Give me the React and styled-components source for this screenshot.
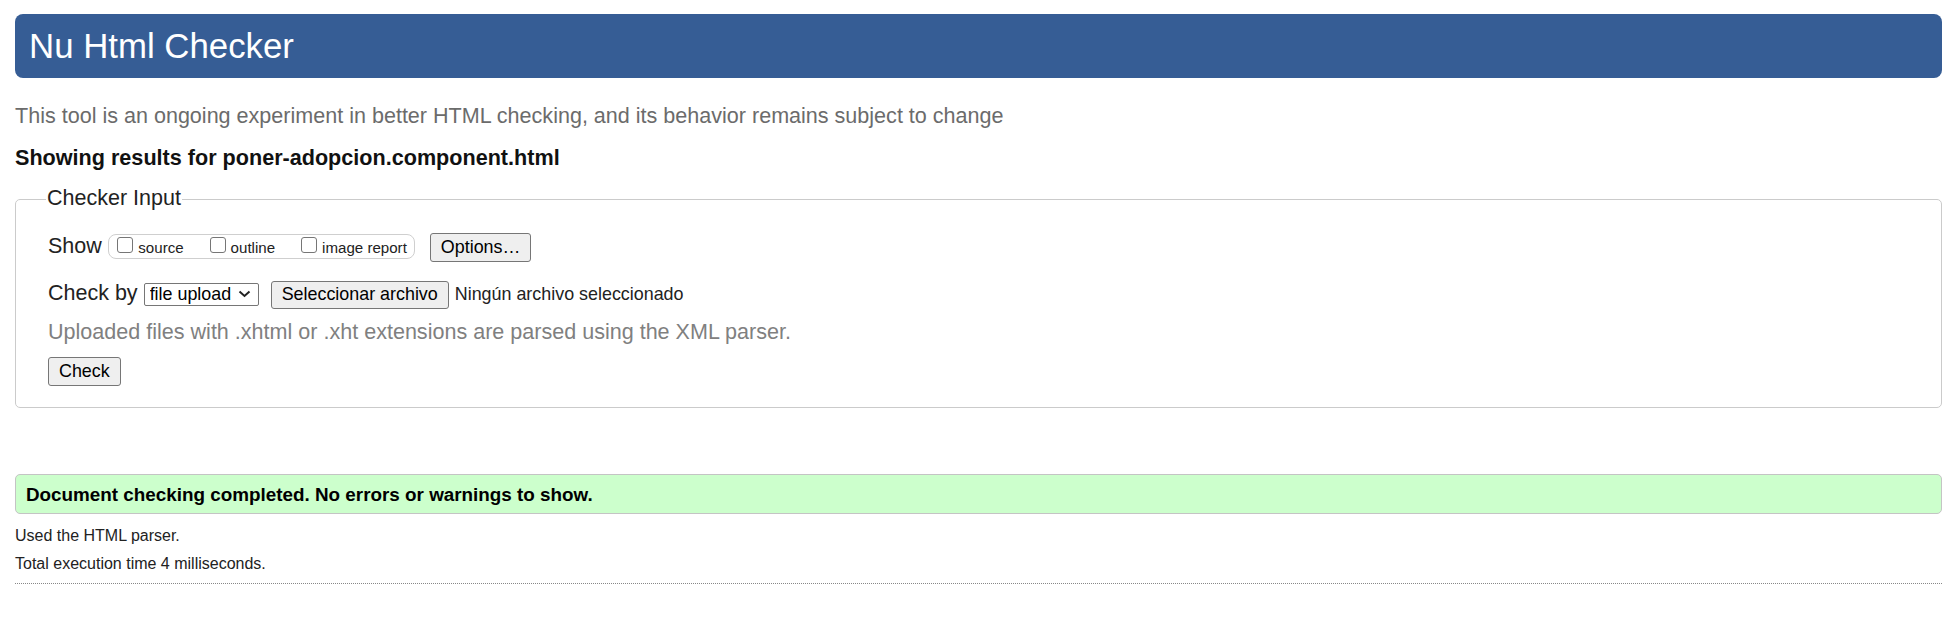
import React from "react";
import styled, { createGlobalStyle } from "styled-components";

const GlobalStyle = createGlobalStyle`
  body {
    margin: 0;
    background: #fff;
    color: #222;
    font-family: "Liberation Sans", Arial, sans-serif;
  }
`;

const Page = styled.div`
  padding: 14px 13px 40px 15px;
`;

const Banner = styled.h1`
  margin: 0;
  height: 64px;
  line-height: 64px;
  padding-left: 14px;
  background: #365d95;
  color: #fff;
  font-size: 34.8px;
  font-weight: normal;
  border-radius: 8px;
`;

const Intro = styled.p`
  margin: 24.5px 0 0;
  font-size: 21.55px;
  line-height: 25.6px;
  color: #6b6b6b;
`;

const ResultsFor = styled.p`
  margin: 17px 0 0;
  font-size: 21.6px;
  line-height: 25.6px;
  font-weight: bold;
  color: #111;
`;

const Fieldset = styled.fieldset`
  margin: 15.5px 0 0;
  padding: 0 32px 21px;
  border: 1px solid #cbcbcb;
  border-radius: 5px;
  min-width: 0;
`;

const Legend = styled.legend`
  margin-left: -2px;
  padding: 0 1px 2px;
  font-size: 21.5px;
  line-height: 25.6px;
  color: #222;
`;

const Row = styled.div`
  display: flex;
  align-items: baseline;
  margin-top: ${({ $mt }) => $mt}px;
`;

const FieldLabel = styled.span`
  font-size: 21.5px;
  line-height: 25.6px;
  color: #222;
`;

const CheckGroup = styled.div`
  display: inline-flex;
  align-items: baseline;
  box-sizing: border-box;
  height: 25px;
  margin-left: 6.5px;
  padding: 2px 7px 0 8px;
  border: 1px solid #cfcfcf;
  border-radius: 8px;
`;

const Option = styled.label`
  display: flex;
  align-items: baseline;
  margin-right: ${({ $last }) => ($last ? 0 : 26)}px;
`;

const CheckBox = styled.input.attrs({ type: "checkbox" })`
  appearance: none;
  box-sizing: border-box;
  width: 16px;
  height: 16px;
  margin: 0 5px 0 0;
  border: 1px solid #767676;
  border-radius: 3px;
  background: #fff;
`;

const OptionText = styled.span`
  font-size: 15.1px;
  line-height: 17px;
  color: #222;
`;

const Button = styled.button`
  box-sizing: border-box;
  height: ${({ $h }) => $h || 29}px;
  margin-left: ${({ $ml }) => $ml || 0}px;
  padding: 0 10px;
  font-family: inherit;
  font-size: 17.9px;
  color: #000;
  background: #efefef;
  border: 1px solid #767676;
  border-radius: 3px;
`;

const SelectWrap = styled.span`
  position: relative;
  display: inline-flex;
  margin-left: 6px;
`;

const Select = styled.select`
  appearance: none;
  box-sizing: border-box;
  width: 115px;
  height: 23px;
  padding: 0 0 0 5px;
  font-family: inherit;
  font-size: 17.9px;
  color: #000;
  background: #fff;
  border: 1px solid #767676;
  border-radius: 2px;
`;

const Chevron = styled.svg`
  position: absolute;
  right: 8px;
  top: 7px;
  pointer-events: none;
`;

const FileStatus = styled.span`
  margin-left: 6px;
  font-size: 17.9px;
  color: #222;
`;

const Hint = styled.p`
  margin: 10.6px 0 0;
  font-size: 21.55px;
  line-height: 25.6px;
  color: #808080;
`;

const Notice = styled.div`
  margin-top: 66px;
  padding: 1px 10px 0;
  line-height: 37px;
  font-size: 18.85px;
  font-weight: bold;
  color: #000;
  background: #ccffcc;
  border: 1px solid #c4c4c4;
  border-radius: 5px;
`;

const Meta = styled.p`
  margin: ${({ $mt }) => $mt}px 0 0;
  font-size: 16px;
  line-height: 20px;
  color: #222;
`;

const Rule = styled.hr`
  margin: 9px 0 0;
  border: 0;
  border-top: 1px dotted #888;
`;

export default function App() {
  return (
    <>
      <GlobalStyle />
      <Page>
        <Banner>Nu Html Checker</Banner>
        <Intro>
          This tool is an ongoing experiment in better HTML checking, and its
          behavior remains subject to change
        </Intro>
        <ResultsFor>Showing results for poner-adopcion.component.html</ResultsFor>

        <Fieldset>
          <Legend>Checker Input</Legend>
          <Row $mt={19}>
            <FieldLabel>Show</FieldLabel>
            <CheckGroup>
              <Option>
                <CheckBox />
                <OptionText>source</OptionText>
              </Option>
              <Option>
                <CheckBox />
                <OptionText>outline</OptionText>
              </Option>
              <Option $last>
                <CheckBox />
                <OptionText>image report</OptionText>
              </Option>
            </CheckGroup>
            <Button $ml={15}>Options…</Button>
          </Row>
          <Row $mt={19}>
            <FieldLabel>Check by</FieldLabel>
            <SelectWrap>
              <Select defaultValue="file">
                <option value="file">file upload</option>
                <option value="address">address</option>
                <option value="text">text input</option>
              </Select>
              <Chevron width="13" height="8" viewBox="0 0 13 8">
                <polyline
                  points="1.5,1.5 6.5,6 11.5,1.5"
                  fill="none"
                  stroke="#222"
                  strokeWidth="2"
                />
              </Chevron>
            </SelectWrap>
            <Button $ml={12} $h={28}>
              Seleccionar archivo
            </Button>
            <FileStatus>Ningún archivo seleccionado</FileStatus>
          </Row>
          <Hint>
            Uploaded files with .xhtml or .xht extensions are parsed using the
            XML parser.
          </Hint>
          <Row $mt={11.6}>
            <Button>Check</Button>
          </Row>
        </Fieldset>

        <Notice>Document checking completed. No errors or warnings to show.</Notice>
        <Meta $mt={12}>Used the HTML parser.</Meta>
        <Meta $mt={8.3}>Total execution time 4 milliseconds.</Meta>
        <Rule />
      </Page>
    </>
  );
}
